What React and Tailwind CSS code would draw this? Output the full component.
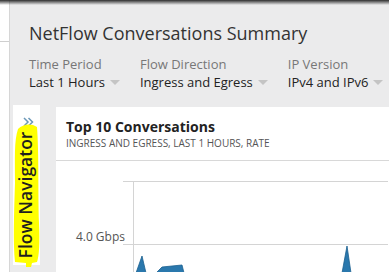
import React from 'react';

const FILTERS = [
  { label: 'Time Period', value: 'Last 1 Hours' },
  { label: 'Flow Direction', value: 'Ingress and Egress' },
  { label: 'IP Version', value: 'IPv4 and IPv6' },
];

const Caret = () => (
  <svg width="10" height="6" viewBox="0 0 10 6" className="ml-[5px] mt-[2px]">
    <path d="M0 0 L10 0 L5 5 Z" fill="#c4c4c4" />
  </svg>
);

const FlowNavigator = () => (
  <div className="relative w-[27px] h-[160px] bg-white shrink-0">
    <svg width="11" height="10" viewBox="0 0 11 10" className="absolute left-[10px] top-[12px]">
      <path d="M1 1 L5 5 L1 9 M5.5 1 L9.5 5 L5.5 9" stroke="#6a98b8" strokeWidth="1.5" fill="none" />
    </svg>
    {/* highlighter mark */}
    <svg width="27" height="144" viewBox="0 0 27 144" className="absolute left-0 top-[18px]">
      <path d="M5 6 C10 1 18 0 24 4 C26 30 25 70 26 100 C27 120 26 134 24 139 L19 140 L18 144 L13 144 L13 140 L2 139 C0 120 1 90 2 60 C2 35 1 18 5 6 Z" fill="#ffff00" />
    </svg>
    <div className="absolute left-[13px] top-[90px] -translate-x-1/2 -translate-y-1/2 -rotate-90 whitespace-nowrap text-[17.5px] font-semibold text-[#1f1f1f] leading-none">
      Flow Navigator
    </div>
  </div>
);

const Chart = () => (
  <svg width="332" height="112" viewBox="0 0 332 112" className="block">
    <line x1="67" y1="20.5" x2="332" y2="20.5" stroke="#d4d4d4" />
    <line x1="67" y1="83.5" x2="332" y2="83.5" stroke="#d4d4d4" />
    <line x1="77.5" y1="20" x2="77.5" y2="112" stroke="#d4d4d4" />
    <text x="69" y="80" textAnchor="end" fontSize="12" fill="#555" fontFamily="'Open Sans', sans-serif">4.0 Gbps</text>
    <path d="M80 112 L86 95 L90 112 Z" fill="#2a78ad" stroke="#1b5f8f" strokeWidth="0.8" />
    <path d="M100 112 L106 106 L126 104 L128 112 Z" fill="#2a78ad" stroke="#1b5f8f" strokeWidth="0.8" />
    <path d="M286 112 L291 85 L295 112 Z" fill="#2a78ad" stroke="#1b5f8f" strokeWidth="0.8" />
  </svg>
);

export default function App() {
  return (
    <div className="relative w-[389px] h-[272px] overflow-hidden flex bg-[#ebebec] font-['Open_Sans',sans-serif]">
      <div className="absolute inset-x-0 top-0 h-[5px] bg-gradient-to-b from-[#2e2e2e] to-transparent" />
      <div className="w-[10px] shrink-0 bg-white border-r border-[#d6d6d6]">
        <div className="h-[42px] border-b border-[#cfcfcf]" />
      </div>
      <div className="flex-1 flex flex-col">
        <div className="pl-[19px] pt-[20px]">
          <h1 className="text-[18px] leading-[26px] text-[#333]">NetFlow Conversations Summary</h1>
          <div className="flex gap-[20px] mt-[9px]">
            {FILTERS.map(f => (
              <div key={f.label} className="flex flex-col">
                <span className="text-[13px] leading-[18px] text-[#777]">{f.label}</span>
                <span className="flex items-center text-[13px] leading-[18px] text-[#222]">
                  {f.value}
                  <Caret />
                </span>
              </div>
            ))}
          </div>
        </div>
        <div className="flex mt-[14px] pl-[3px] gap-[16px]">
          <FlowNavigator />
          <div className="flex-1 mt-[2px] bg-white">
            <div className="px-[10px] pt-[11px] pb-[10px] border-b border-[#d8d8d8]">
              <div className="text-[14px] leading-[18px] font-bold text-[#222]">Top 10 Conversations</div>
              <div className="text-[10px] leading-[14px] text-[#555] uppercase">Ingress and Egress, Last 1 Hours, Rate</div>
            </div>
            <Chart />
          </div>
        </div>
      </div>
    </div>
  );
}
